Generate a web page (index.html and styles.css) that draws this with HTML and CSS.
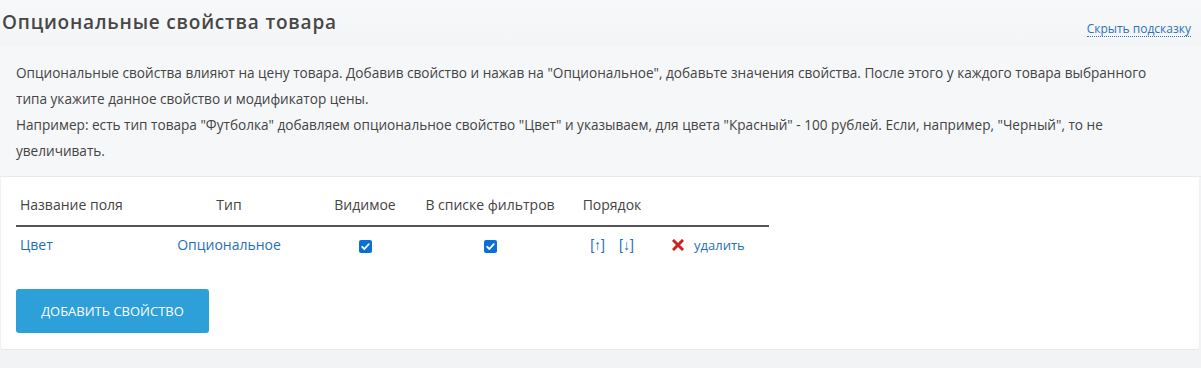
FILE: index.html
```html
<!DOCTYPE html>
<html lang="ru">
<head>
<meta charset="utf-8">
<link rel="stylesheet" href="styles.css">
</head>
<body>
<div class="page">
  <div class="head">
    <h1 class="title">Опциональные свойства товара</h1>
    <a class="hide-hint" href="#">Скрыть подсказку</a>
  </div>
  <div class="hint">
    <p>Опциональные свойства влияют на цену товара. Добавив свойство и нажав на "Опциональное", добавьте значения свойства. После этого у каждого товара выбранного<br>типа укажите данное свойство и модификатор цены.</p>
    <p>Например: есть тип товара "Футболка" добавляем опциональное свойство "Цвет" и указываем, для цвета "Красный" - 100 рублей. Если, например, "Черный", то не увеличивать.</p>
  </div>
  <div class="panel">
    <table class="props">
      <thead>
        <tr>
          <th class="c-name">Название поля</th>
          <th class="c-type">Тип</th>
          <th class="c-vis">Видимое</th>
          <th class="c-filter">В списке фильтров</th>
          <th class="c-order">Порядок</th>
          <th class="c-del"></th>
        </tr>
      </thead>
      <tbody>
        <tr>
          <td class="c-name"><a href="#">Цвет</a></td>
          <td class="c-type"><a href="#">Опциональное</a></td>
          <td class="c-vis"><span class="cb"><svg viewBox="0 0 13 13" width="13" height="13"><rect width="13" height="13" rx="2" fill="#0b6fd6"/><path d="M3.2 6.8 5.4 9 9.8 4.2" fill="none" stroke="#fff" stroke-width="1.8" stroke-linecap="round" stroke-linejoin="round"/></svg></span></td>
          <td class="c-filter"><span class="cb"><svg viewBox="0 0 13 13" width="13" height="13"><rect width="13" height="13" rx="2" fill="#0b6fd6"/><path d="M3.2 6.8 5.4 9 9.8 4.2" fill="none" stroke="#fff" stroke-width="1.8" stroke-linecap="round" stroke-linejoin="round"/></svg></span></td>
          <td class="c-order"><a href="#" class="ord">[↑]</a><a href="#" class="ord">[↓]</a></td>
          <td class="c-del"><a href="#" class="del"><svg viewBox="0 0 12 12" width="12" height="12"><path d="M2 2 10 10M10 2 2 10" stroke="#d02020" stroke-width="3" stroke-linecap="square"/></svg><span>удалить</span></a></td>
        </tr>
      </tbody>
    </table>
    <button class="btn">ДОБАВИТЬ СВОЙСТВО</button>
  </div>
</div>
</body>
</html>
```

FILE: styles.css
```css
html, body {
  margin: 0;
  padding: 0;
  background: #f2f3f5;
}
body {
  font-family: "Open Sans", "Liberation Sans", sans-serif;
  color: #444;
}
.page {
  width: 1201px;
  height: 368px;
  overflow: hidden;
}
.head {
  display: flex;
  justify-content: space-between;
  align-items: flex-end;
  height: 46px;
  background: linear-gradient(#f7f8fa, #f4f5f7);
}
.title {
  margin: 0 0 12px 2px;
  font-size: 19px;
  font-weight: 600;
  color: #474747;
  line-height: 24px;
  letter-spacing: 0.8px;
}
.hide-hint {
  margin: 0 10px 9px 0;
  font-size: 12px;
  color: #2a73b8;
  text-decoration: none;
  border-bottom: 1px dotted #2a73b8;
  line-height: 15px;
}
.hint {
  background: #f6f7f9;
  border-bottom: 1px solid #e8eaed;
  padding: 14px 16px 12px 16px;
  font-size: 13.6px;
  line-height: 26px;
  color: #444;
}
.hint p {
  margin: 0;
}
.panel {
  background: #fff;
  margin: 0 2px 0 1px;
  padding: 0 15px 16px 15px;
  border-radius: 0 0 3px 3px;
  box-shadow: 0 1px 1px rgba(0,0,0,0.04);
}
.props {
  border-collapse: collapse;
  table-layout: fixed;
  font-size: 14px;
  margin-bottom: 26px;
}
.props th {
  font-weight: 400;
  color: #444;
  padding: 18px 0 10px 0;
  line-height: 20px;
  border-bottom: 2px solid #555;
}
.props td {
  height: 36px;
  padding: 0;
  vertical-align: middle;
  line-height: 20px;
}
.props a {
  color: #1f6fb5;
  text-decoration: none;
}
.props .c-name { width: 128px; text-align: left; padding-left: 4px; }
.props .c-type { width: 162px; text-align: center; }
.props .c-vis { width: 110px; text-align: center; }
.props .c-filter { width: 140px; text-align: center; }
.props .c-order { width: 104px; text-align: center; }
.props .c-del { width: 97px; text-align: left; padding-left: 8px; }
.cb {
  display: inline-flex;
  vertical-align: middle;
}
.ord {
  margin: 0 7px;
  font-family: "Liberation Sans", "DejaVu Sans", sans-serif;
  font-size: 14px;
}
.del {
  display: inline-flex;
  align-items: center;
  gap: 10px;
  font-size: 13px;
}
.btn {
  display: block;
  width: 193px;
  height: 44px;
  background: #2d9fd9;
  color: #fff;
  border: 0;
  border-radius: 3px;
  font-family: "Open Sans", "Liberation Sans", sans-serif;
  font-size: 13px;
  padding: 0;
}
```
